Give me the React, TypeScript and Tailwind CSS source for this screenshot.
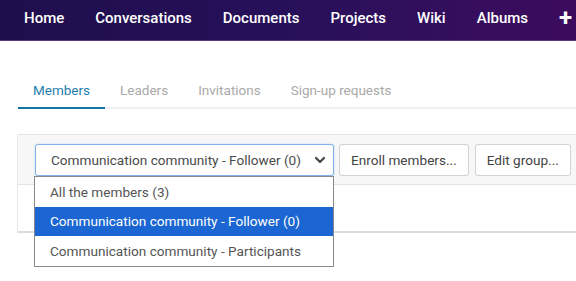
import { ChevronDown } from 'lucide-react';

const NAV = ['Home', 'Conversations', 'Documents', 'Projects', 'Wiki', 'Albums'];
const TABS = ['Members', 'Leaders', 'Invitations', 'Sign-up requests'];
const OPTIONS = [
    'All the members (3)',
    'Communication community - Follower (0)',
    'Communication community - Participants',
];

export default function App() {
    const selected = 1;

    return (
        <div className="w-[576px] h-[281px] overflow-hidden bg-white font-['Roboto',sans-serif]">
            {/* barre du haut */}
            <div className="h-[41px] flex items-center gap-[31px] pl-[24px] pb-[3px] bg-gradient-to-r from-[#1f0e4c] via-[#27105a] to-[#3d0b5e] border-b border-[#5a3b82] text-white text-[15px] font-medium whitespace-nowrap">
                {NAV.map(item => (
                    <span key={item}>{item}</span>
                ))}
                <span className="text-[24px] font-bold leading-none -mt-[2px]">+</span>
            </div>

            {/* onglets */}
            <div className="mt-[30px] ml-[18px] flex border-b-2 border-[#efefef] text-[13.5px]">
                {TABS.map((tab, i) => (
                    <div
                        key={tab}
                        className={`px-[15px] pt-[9px] pb-[7px] -mb-[2px] border-b-2 ${i === 0 ? 'border-[#1576a4] text-[#1f7fae]' : 'border-transparent text-[#a9a9a9]'}`}
                    >
                        {tab}
                    </div>
                ))}
            </div>

            {/* panneau */}
            <div className="mt-[25px] ml-[17px] border-l border-t border-[#e6e6e6] rounded-tl-[3px]">
                <div className="relative flex items-center gap-[5px] pl-[17px] pt-[9px] pb-[8px] bg-[#f7f7f7] border-b border-[#e4e4e4] whitespace-nowrap text-[13.6px]">
                    <div className="relative">
                        <div className="w-[299px] h-[32px] flex items-center justify-between pl-[15px] pr-[5px] bg-white border border-[#7fb0ea] rounded-[3px] shadow-[0_0_2px_#b9d6f7] text-[#4a4a4a]">
                            <span>{OPTIONS[selected]}</span>
                            <ChevronDown size={16} strokeWidth={3.2} className="text-[#444]" />
                        </div>

                        {/* liste ouverte */}
                        <div className="absolute left-[-1px] top-[32px] w-[300px] bg-white border border-[#8a8a8a] z-10 text-[#555]">
                            {OPTIONS.map((opt, i) => (
                                <div
                                    key={opt}
                                    className={`h-[29.5px] flex items-center pl-[15px] ${i === selected ? 'bg-[#1b66d2] text-white' : ''}`}
                                >
                                    {opt}
                                </div>
                            ))}
                        </div>
                    </div>
                    <button className="h-[32px] px-[11px] bg-white border border-[#d2d2d2] rounded-[3px] text-[#444]">
                        Enroll members...
                    </button>
                    <button className="h-[32px] px-[11px] ml-[1px] bg-white border border-[#d2d2d2] rounded-[3px] text-[#444]">
                        Edit group...
                    </button>
                    <button className="h-[32px] w-[40px] bg-white border border-[#d2d2d2] rounded-[3px]" />
                </div>
                <div className="h-[48px] border-b-2 border-[#dcdcdc]" />
            </div>
        </div>
    );
}
